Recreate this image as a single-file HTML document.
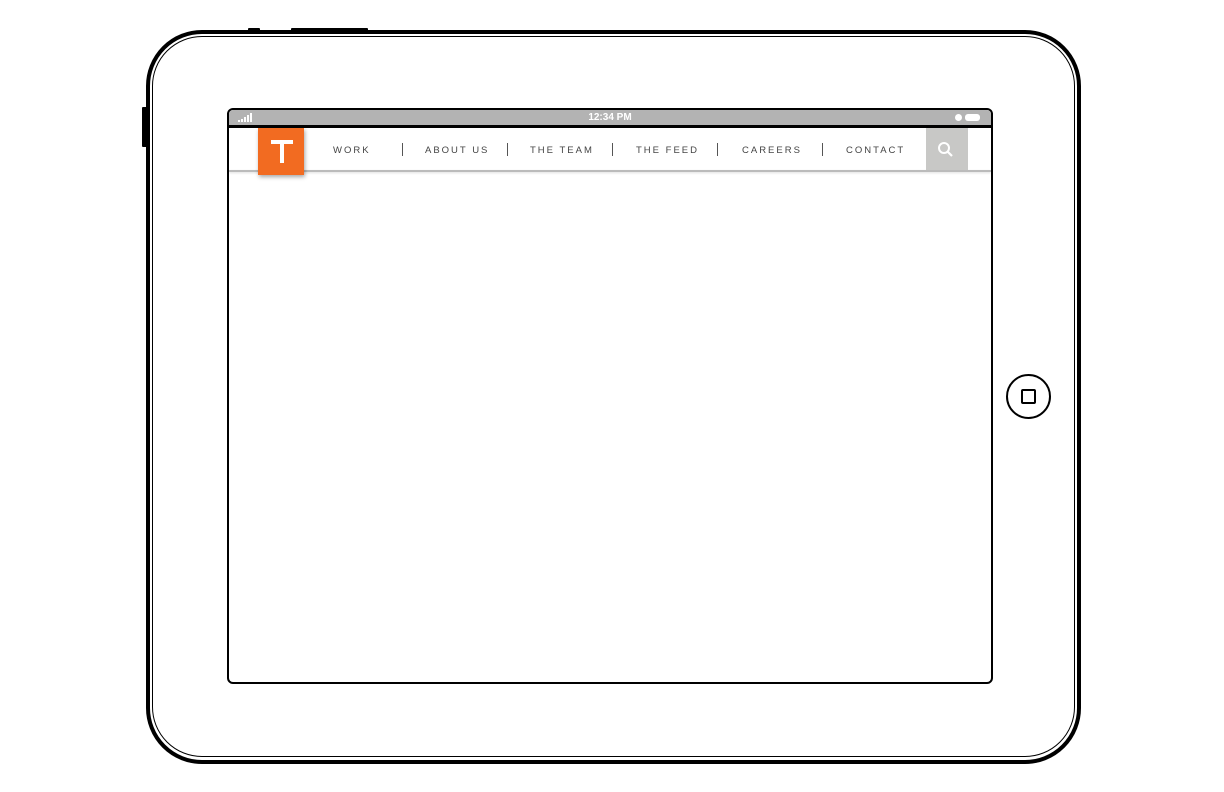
<!DOCTYPE html>
<html><head><style>
body{margin:0;width:1224px;height:792px;background:#fff;position:relative;overflow:hidden;font-family:"Liberation Sans",sans-serif}
div{position:absolute;box-sizing:border-box}
.nav{top:145px;font-size:9.5px;letter-spacing:2px;color:#444}
.sep{top:143px;width:1px;height:13px;background:#555}
</style></head><body>
<div style="left:248px;top:28px;width:12px;height:4px;background:#000;border-radius:1px"></div>
<div style="left:291px;top:28px;width:77px;height:4px;background:#000;border-radius:1px"></div>
<div style="left:142px;top:107px;width:6px;height:40px;background:#000;border-radius:1px"></div>
<div style="left:146px;top:30px;width:935px;height:734px;border:4px solid #000;border-radius:56px;background:#fff"></div>
<div style="left:152px;top:36px;width:923px;height:721px;border:1.5px solid #000;border-radius:50px"></div>
<div style="left:227px;top:108px;width:766px;height:576px;border:2px solid #000;border-radius:6px;overflow:hidden;background:#fff">
 <div style="left:0;top:0;width:762px;height:15px;background:#b3b3b3"></div>
 <div style="left:0;top:15px;width:762px;height:3px;background:#000"></div>
 <div style="left:0;top:60px;width:762px;height:2px;background:#bbb;box-shadow:0 1px 2px #ddd"></div>
 <div style="left:0;top:0;width:762px;height:15px;text-align:center;color:#fff;font-size:10px;font-weight:bold;line-height:15px">12:34 PM</div>
 <svg style="position:absolute;left:9px;top:3px" width="16" height="9"><rect x="0" y="7" width="2" height="2" fill="#fff"/><rect x="3" y="6" width="2" height="3" fill="#fff"/><rect x="6" y="4" width="2" height="5" fill="#fff"/><rect x="9" y="2" width="2" height="7" fill="#fff"/><rect x="12" y="0" width="2" height="9" fill="#fff"/></svg>
 <div style="left:726px;top:4px;width:7px;height:7px;border-radius:50%;background:#fff"></div>
 <div style="left:736px;top:4px;width:15px;height:7px;border-radius:3px;background:#fff"></div>
 <div style="left:697px;top:18px;width:42px;height:42px;background:#c8c8c6"></div>
 <svg style="position:absolute;left:708px;top:31px" width="18" height="18"><circle cx="7" cy="7" r="5" fill="none" stroke="#fff" stroke-width="2"/><line x1="10.5" y1="10.5" x2="15" y2="15" stroke="#fff" stroke-width="2.2"/></svg>
 <div style="left:29px;top:18px;width:46px;height:47px;background:#f26b21;box-shadow:1px 2px 4px rgba(0,0,0,.35)"></div>
 <div style="left:42px;top:30px;width:22px;height:4px;background:#fff"></div>
 <div style="left:51px;top:30px;width:4px;height:23px;background:#fff"></div>
</div>
<div class="nav" style="left:333px">WORK</div>
<div class="sep" style="left:402px"></div>
<div class="nav" style="left:425px">ABOUT US</div>
<div class="sep" style="left:507px"></div>
<div class="nav" style="left:530px">THE TEAM</div>
<div class="sep" style="left:612px"></div>
<div class="nav" style="left:636px">THE FEED</div>
<div class="sep" style="left:717px"></div>
<div class="nav" style="left:742px">CAREERS</div>
<div class="sep" style="left:822px"></div>
<div class="nav" style="left:846px">CONTACT</div>
<div style="left:1006px;top:374px;width:45px;height:45px;border:2px solid #000;border-radius:50%"></div>
<div style="left:1021px;top:389px;width:15px;height:15px;border:2px solid #000;border-radius:2px"></div>
</body></html>
